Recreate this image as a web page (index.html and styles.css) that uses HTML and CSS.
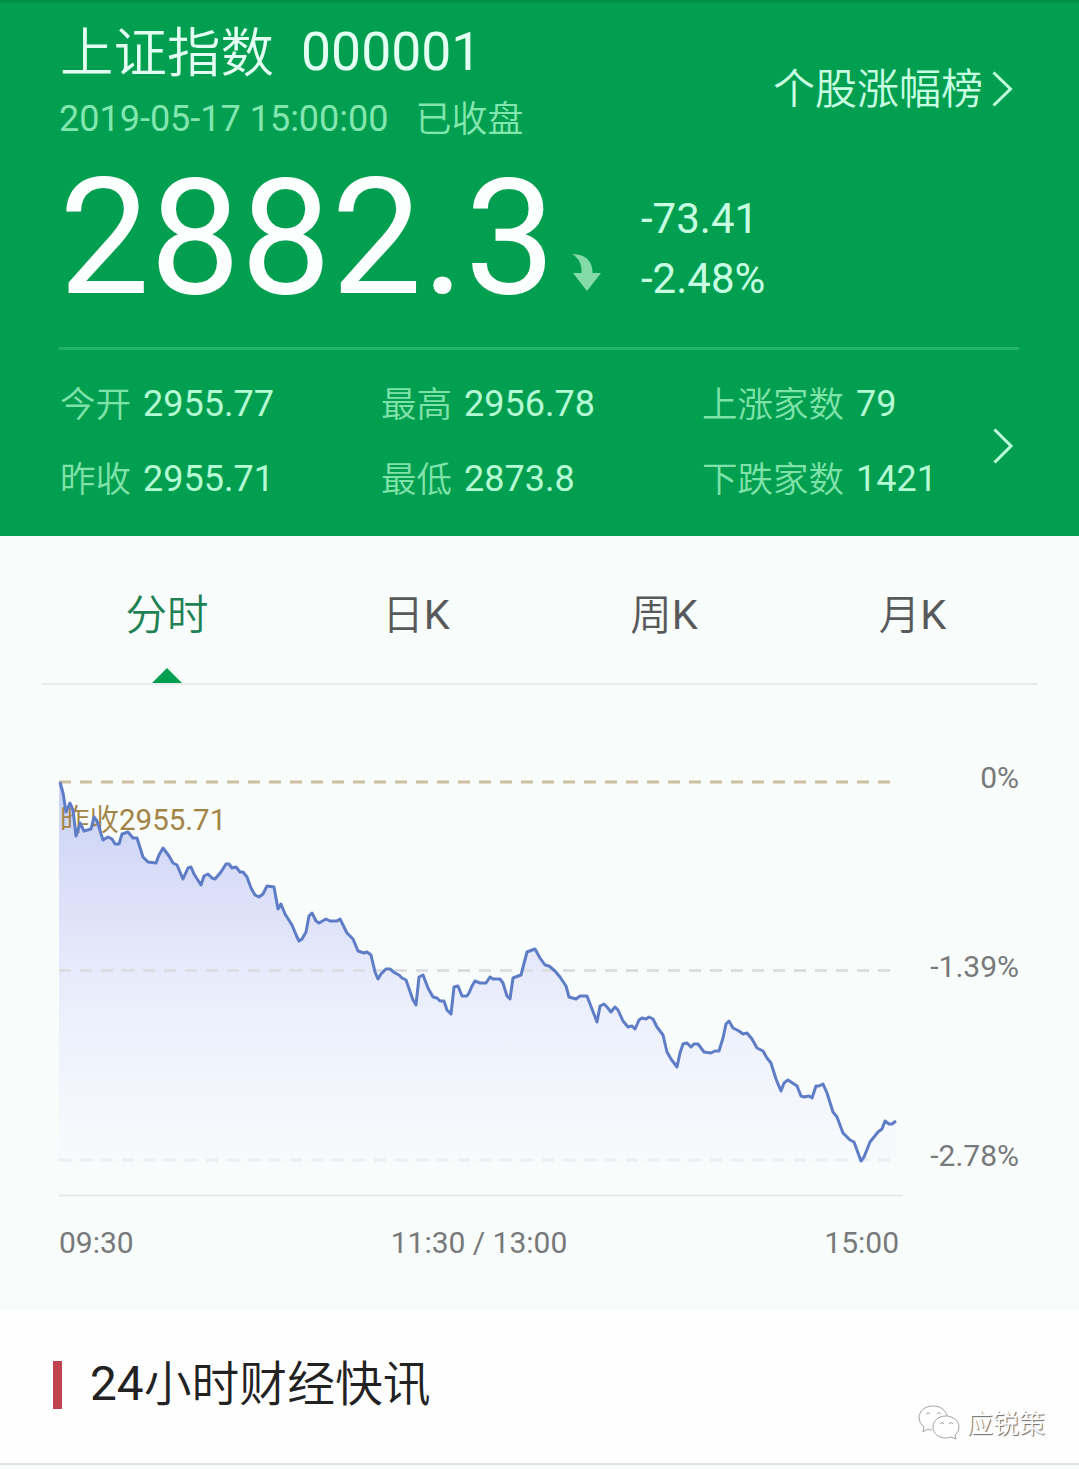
FILE: index.html
```html
<!DOCTYPE html>
<html lang="zh-CN">
<head>
    <meta charset="UTF-8">
    <meta name="viewport" content="width=device-width, initial-scale=1.0">
    <title>上证指数 000001</title>
    <link rel="stylesheet" href="styles.css">
</head>
<body>

    <header class="quote">
        <div class="quote-top">
            <div>
                <h1><span class="cn name">上证指数</span>000001</h1>
                <p class="time">2019-05-17 15:00:00<span class="cn state">已收盘</span></p>
            </div>
            <a class="rank"><span class="cn">个股涨幅榜</span>
                <svg class="chevron" width="22" height="36" viewBox="0 0 22 36"><path d="M1.5 1.5L18.5 18L1.5 34.5"/></svg>
            </a>
        </div>

        <div class="price-row">
            <span class="price">2882.3</span>
            <svg class="down" width="30" height="38" viewBox="0 0 30 38"><path d="M0 0C13 0 21 7 20.5 19H29L15 37L1 19H9.5C10 10 7 4 0 0Z"/></svg>
            <div class="change">
                <div>-73.41</div>
                <div>-2.48%</div>
            </div>
        </div>

        <div class="stats">
            <div class="stat"><span class="cn">今开</span>2955.77</div>
            <div class="stat"><span class="cn">最高</span>2956.78</div>
            <div class="stat"><span class="cn">上涨家数</span>79</div>
            <div class="stat"><span class="cn">昨收</span>2955.71</div>
            <div class="stat"><span class="cn">最低</span>2873.8</div>
            <div class="stat"><span class="cn">下跌家数</span>1421</div>
            <svg class="chevron more" width="22" height="36" viewBox="0 0 22 36"><path d="M1.5 1.5L18 18L1.5 34.5"/></svg>
        </div>
    </header>

    <nav class="tabs">
        <a class="tab active"><div><span class="cn">分时</span></div></a>
        <a class="tab"><div><span class="cn">日</span>K</div></a>
        <a class="tab"><div><span class="cn">周</span>K</div></a>
        <a class="tab"><div><span class="cn">月</span>K</div></a>
    </nav>

    <section class="chart">
        <svg width="1079" height="625" viewBox="0 685 1079 625">
            <defs>
                <linearGradient id="area" gradientUnits="userSpaceOnUse" x1="0" y1="782" x2="0" y2="1165">
                    <stop offset="0" stop-color="#c8d2f6"/>
                    <stop offset="0.3" stop-color="#dce0f8"/>
                    <stop offset="0.6" stop-color="#ecf0fc"/>
                    <stop offset="1" stop-color="#f8fbfc"/>
                </linearGradient>
            </defs>

            <path class="area" id="areaPath"/>
            <path class="grid prev" d="M59 782H891"/>
            <path class="grid" d="M59 970.5H891"/>
            <path class="grid low" d="M59 1160H891"/>
            <path class="axis" d="M59 1195.5H902"/>
            <text class="prev-label" x="60" y="830"><tspan class="cn">昨收</tspan>2955.71</text>
            <polyline class="line" id="linePath" points="60,782 63,793 66,812 70,803 73,810 76,836 80,823 84,831 91,829 94,817 97,821 103,840 108,837 112,839 115,844 119,844 122,834 128,832 133,838 137,838 143,857 148,862 156,863 159,855 163,848 169,856 173,863 177,865 183,879 188,868 191,867 194,874 201,885 204,876 208,874 212,878 215,879 221,872 226,864 229,864 232,868 236,867 240,872 243,872 247,877 251,888 255,895 259,897 263,894 267,886 274,887 278,909 281,904 285,914 292,925 297,937 299,941 302,939 306,932 309,916 312,913 316,921 319,923 326,919 330,921 337,921 340,919 347,933 353,939 358,951 364,953 367,952 371,955 375,972 378,979 381,974 386,969 390,969 395,973 399,975 402,978 406,980 413,1000 416,1005 419,977 423,975 428,988 433,997 437,998 440,1001 444,1001 447,1010 451,1014 454,987 458,986 462,996 467,996 469,993 472,986 475,981 480,983 486,983 490,977 493,979 500,979 503,983 507,996 510,999 513,978 521,975 527,952 535,949 540,958 545,965 549,966 555,971 560,977 566,986 569,997 576,999 580,996 587,996 592,1009 597,1022 600,1006 604,1004 607,1007 611,1012 615,1007 618,1010 623,1021 628,1027 632,1026 635,1029 639,1020 642,1018 646,1019 649,1017 653,1019 657,1027 663,1035 667,1052 671,1059 677,1067 680,1053 683,1044 687,1043 691,1047 694,1044 698,1044 704,1052 711,1053 715,1051 719,1051 723,1038 726,1024 729,1021 733,1028 739,1031 743,1034 747,1033 752,1039 757,1048 763,1051 767,1058 771,1063 776,1079 781,1091 784,1083 788,1080 797,1086 801,1096 804,1097 809,1096 812,1098 816,1086 819,1086 823,1084 827,1093 833,1112 837,1117 843,1133 850,1140 854,1142 861,1161 864,1157 870,1142 878,1132 882,1129 885,1121 889,1124 892,1124 896,1121"/>

            <g class="label" text-anchor="end">
                <text x="1019" y="788">0%</text>
                <text x="1019" y="977">-1.39%</text>
                <text x="1019" y="1166">-2.78%</text>
            </g>
            <g class="label">
                <text x="59" y="1253">09:30</text>
                <text x="479" y="1253" text-anchor="middle">11:30 / 13:00</text>
                <text x="899" y="1253" text-anchor="end">15:00</text>
            </g>
        </svg>
    </section>

    <section class="news">
        <h2>24<span class="cn">小时财经快讯</span></h2>
        <div class="watermark">
            <svg width="42" height="36" viewBox="0 0 42 36">
                <path d="M14 26Q11 26 10 25L5 28L6 23Q1 19 1 14C1 7 7 2 15 2C22 2 28 6 29 12"/>
                <path d="M28 12C20 12 15 17 15 23C15 30 21 34 28 34Q31 34 33 33L38 35L37 31Q41 28 41 23C41 17 35 12 28 12Z"/>
                <path d="M8 10Q10 7 12 10M19 10Q21 7 23 10M22 20Q24 17 26 20M31 20Q33 17 35 20"/>
            </svg>
            <span class="cn">应锐策</span>
        </div>
    </section>

    <script>
        // 用折线的点生成下方的填充区域
        var points = document.getElementById('linePath').getAttribute('points');
        document.getElementById('areaPath').setAttribute('d', 'M59 1165V782L' + points + 'L896 1165Z');
    </script>

</body>
</html>
```
FILE: styles.css
```css
body {
    margin: 0;
    height: 1469px;
    overflow: hidden;
    background: #f8fcfb;
    font-family: Roboto, "Noto Sans CJK SC", sans-serif;
}

h1, h2, p {
    margin: 0;
    font-weight: 400;
}

.cn {
    font-family: "Noto Sans CJK SC DemiLight", "Noto Sans CJK SC", sans-serif;
    font-weight: 350;
    line-height: 1;
    vertical-align: -1px;
}

.quote {
    box-sizing: border-box;
    height: 536px;
    padding: 17px 60px 0 60px;
    background: linear-gradient(#008c45, #029f50 5px);
    color: #e2fff1;
}

.quote-top {
    display: flex;
    justify-content: space-between;
    height: 134px;
}

h1 {
    font-size: 53.5px;
    line-height: 70px;
}

.name {
    margin-right: 27px;
    vertical-align: -2px;
}

.time {
    margin-left: -1px;
    font-size: 36px;
    line-height: 64px;
    color: #83e6ae;
}

.state {
    margin-left: 27px;
}

.rank {
    display: flex;
    align-items: center;
    gap: 9px;
    padding-top: 10px;
    margin-right: 5px;
    font-size: 42px;
    color: #c8ffe2;
}

.rank .cn {
    margin-bottom: 6px;
}

.chevron {
    fill: none;
    stroke: #c0ffdc;
    stroke-width: 3;
}

.price-row {
    display: flex;
    height: 196px;
    border-bottom: 3px solid #25b269;
    margin: 0 0 0 -1px;
}

.price {
    width: 513px;
    font-size: 161.5px;
    line-height: 174px;
    color: #fbfffd;
}

.down {
    margin-top: 103px;
    fill: #85dba8;
}

.change {
    margin: 38px 0 0 39px;
    font-size: 42px;
    line-height: 60px;
    color: #c8ffe2;
}

.stats {
    display: grid;
    grid-template-columns: 321px 321px 291px 22px;
    grid-template-rows: 75px 75px;
    align-items: center;
    padding-top: 17px;
    font-size: 36px;
    line-height: 75px;
    color: #b5fbd3;
}

.stat .cn {
    margin-right: 12px;
    font-size: 35.5px;
    color: #7fe2a9;
}

.more {
    grid-column: 4;
    grid-row: 1 / 3;
    margin-top: 7px;
}

.tabs {
    display: grid;
    grid-template-columns: 250px 248px 248px 1fr;
    height: 147px;
    margin: 0 42px;
    border-bottom: 2px solid #e8ebeb;
}

.tab {
    display: flex;
    flex-direction: column;
    align-items: center;
    font-size: 41.5px;
    line-height: 158px;
    color: #58595b;
}

.active {
    color: #1f8254;
}

.active::after {
    content: '';
    margin-top: -26px;
    border: 15px solid transparent;
    border-top: 0;
    border-bottom-color: #029f50;
}

.chart svg {
    display: block;
}

.area {
    fill: url(#area);
}

.line {
    fill: none;
    stroke: #5f7cc6;
    stroke-width: 3;
    stroke-linejoin: round;
}

.grid {
    stroke: #dcdee1;
    stroke-width: 3;
    stroke-dasharray: 12 9;
}

.prev {
    stroke: #cbbf9d;
}

.low {
    stroke: #eceef1;
}

.axis {
    stroke: #e6eaea;
    stroke-width: 2;
}

.label, .prev-label {
    font-size: 30px;
    fill: #77797a;
}

.prev-label {
    font-size: 29.5px;
    fill: #a28444;
}

.news {
    display: flex;
    justify-content: space-between;
    box-sizing: border-box;
    height: 155px;
    padding: 51px 34px 0 53px;
    background: #fefefe;
    border-bottom: 2px solid #e0e1e1;
}

h2 {
    height: 48px;
    border-left: 9px solid #c0434f;
    padding-left: 28px;
    font-size: 47.8px;
    line-height: 47px;
    color: #222;
}

h2 .cn {
    line-height: 0;
}

.watermark {
    display: flex;
    align-items: center;
    gap: 7px;
    height: 121px;
    font-size: 26px;
    color: #fff;
    text-shadow: 1px 1px 1px #666;
}

.watermark svg {
    fill: #fff;
    stroke: #a3a3a3;
    stroke-width: 1;
}
```
